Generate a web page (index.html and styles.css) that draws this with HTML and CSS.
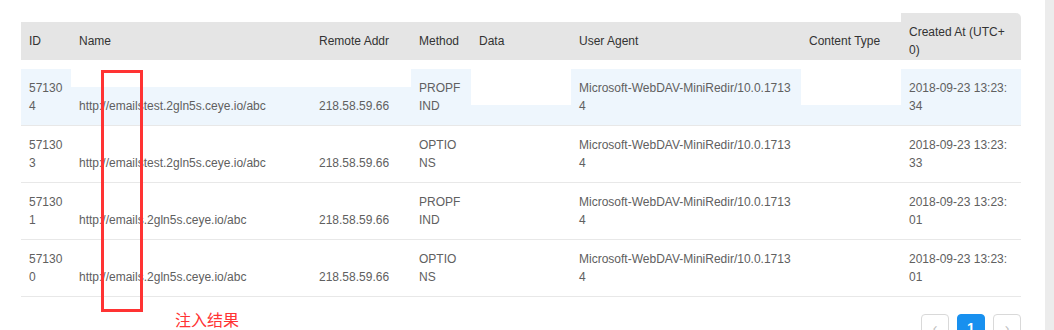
FILE: index.html
```html
<!DOCTYPE html>
<html lang="en">
<head>
  <meta charset="UTF-8">
  <meta name="viewport" content="width=device-width, initial-scale=1.0">
  <title>Records</title>
  <link rel="stylesheet" href="styles.css">
</head>
<body>

<div class="page">
  <div class="main">
    <table class="records">
      <colgroup>
        <col style="width: 50px">
        <col style="width: 240px">
        <col style="width: 100px">
        <col style="width: 60px">
        <col style="width: 100px">
        <col style="width: 230px">
        <col style="width: 100px">
        <col style="width: 120px">
      </colgroup>
      <thead>
        <tr>
          <th>ID</th>
          <th>Name</th>
          <th>Remote Addr</th>
          <th>Method</th>
          <th>Data</th>
          <th>User Agent</th>
          <th>Content Type</th>
          <th class="created">Created At (UTC+0)</th>
        </tr>
      </thead>
      <tbody>
        <tr class="hover">
          <td>571304</td>
          <td class="low mid-gap">http://emailstest.2gln5s.ceye.io/abc</td>
          <td class="low mid-gap">218.58.59.66</td>
          <td>PROPFIND</td>
          <td class="big-gap"></td>
          <td>Microsoft-WebDAV-MiniRedir/10.0.17134</td>
          <td class="big-gap"></td>
          <td>2018-09-23 13:23:34</td>
        </tr>
        <tr>
          <td>571303</td>
          <td class="low">http://emailstest.2gln5s.ceye.io/abc</td>
          <td class="low">218.58.59.66</td>
          <td>OPTIONS</td>
          <td></td>
          <td>Microsoft-WebDAV-MiniRedir/10.0.17134</td>
          <td></td>
          <td>2018-09-23 13:23:33</td>
        </tr>
        <tr>
          <td>571301</td>
          <td class="low">http://emails.2gln5s.ceye.io/abc</td>
          <td class="low">218.58.59.66</td>
          <td>PROPFIND</td>
          <td></td>
          <td>Microsoft-WebDAV-MiniRedir/10.0.17134</td>
          <td></td>
          <td>2018-09-23 13:23:01</td>
        </tr>
        <tr>
          <td>571300</td>
          <td class="low">http://emails.2gln5s.ceye.io/abc</td>
          <td class="low">218.58.59.66</td>
          <td>OPTIONS</td>
          <td></td>
          <td>Microsoft-WebDAV-MiniRedir/10.0.17134</td>
          <td></td>
          <td>2018-09-23 13:23:01</td>
        </tr>
      </tbody>
    </table>

    <div class="pager">
      <button class="page-btn">&lsaquo;</button>
      <button class="page-btn active">1</button>
      <button class="page-btn">&rsaquo;</button>
    </div>

    <!-- annotation drawn over the screenshot -->
    <div class="mark-box"></div>
    <div class="mark-note">注入结果</div>
  </div>
  <div class="scrollbar"></div>
</div>

</body>
</html>
```

FILE: styles.css
```css
body {
  margin: 0;
  font-family: 'Liberation Sans', Arial, sans-serif;
  font-size: 12px;
  color: #606060;
  background: #fff;
}

.page {
  display: flex;
  height: 330px;
  overflow: hidden;
}

.main {
  position: relative;
  flex: 1;
  padding: 13px 0 0 21px;
}

.scrollbar {
  width: 9px;
  background: #ececec;
}

.records {
  table-layout: fixed;
  width: 1000px;
  border-collapse: separate;
  border-spacing: 0;
  line-height: 18px;
}

.records th {
  text-align: left;
  font-weight: normal;
  color: #333;
  vertical-align: top;
  padding: 19px 8px 10px;
  background: linear-gradient(transparent 9px, #e5e5e5 9px);
  word-break: break-all;
}

.records th.created {
  padding: 10px 8px 1px;
  background: #e5e5e5;
  border-top-right-radius: 5px;
}

.records td {
  vertical-align: top;
  padding: 10px 8px;
  border-bottom: 1px solid #e8e8e8;
  word-break: break-all;
}

.records td.low {
  vertical-align: bottom;
}

.records tr.hover td {
  padding-top: 19px;
  background: linear-gradient(#fff 9px, #eef6fd 9px);
}

.records tr.hover td.mid-gap {
  background: linear-gradient(#fff 27px, #eef6fd 27px);
}

.records tr.hover td.big-gap {
  background: linear-gradient(#fff 45px, #eef6fd 45px);
}

.pager {
  display: flex;
  justify-content: flex-end;
  gap: 8px;
  width: 1000px;
  margin-top: 17px;
}

.page-btn {
  width: 28px;
  height: 28px;
  border: 1px solid #d9d9d9;
  border-radius: 4px;
  background: #fff;
  color: #c0c0c0;
  font-family: 'Liberation Sans', Arial, sans-serif;
  font-size: 14px;
  padding: 0;
}

.page-btn.active {
  background: #1890ef;
  border-color: #1890ef;
  color: #fff;
  font-weight: bold;
}

.mark-box {
  position: absolute;
  left: 101px;
  top: 70px;
  width: 36px;
  height: 236px;
  border: 3px solid #f33;
}

.mark-note {
  position: absolute;
  left: 175px;
  top: 309px;
  color: #f33;
  font-family: 'Noto Sans CJK SC', sans-serif;
  font-size: 16px;
  line-height: 20px;
}
```
